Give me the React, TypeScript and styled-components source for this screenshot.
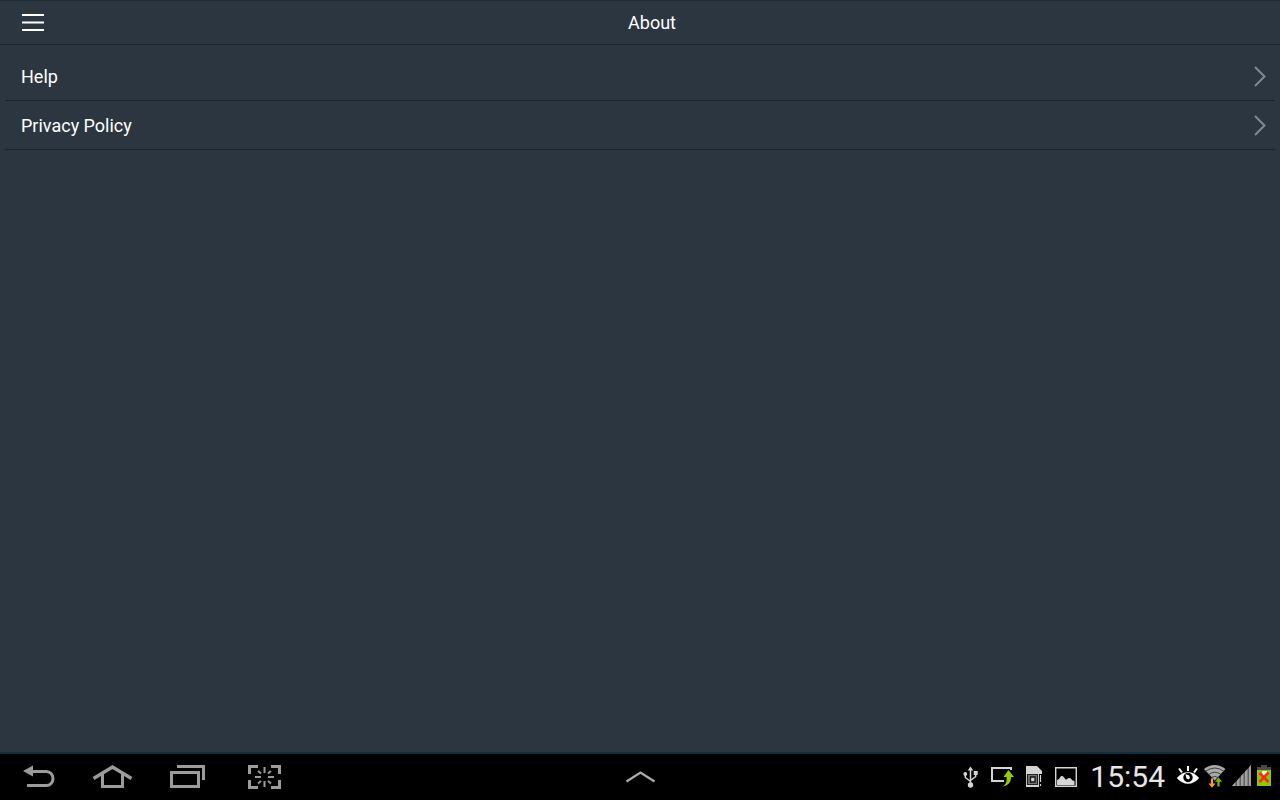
import React from "react";
import styled, { createGlobalStyle } from "styled-components";

const GlobalStyle = createGlobalStyle`
  *, *::before, *::after { box-sizing: border-box; }
  body {
    margin: 0;
    background: #2c3641;
    color: #ffffff;
    font-family: Roboto, "Noto Sans", sans-serif;
  }
`;

const Screen = styled.div`
  display: flex;
  flex-direction: column;
  min-height: 100vh;
`;

const Header = styled.header`
  display: grid;
  grid-template-columns: 1fr auto 1fr;
  align-items: center;
  height: 45px;
  border-top: 1px solid #232a33;
  border-bottom: 1px solid #1b232d;
`;

const Title = styled.h1`
  margin: 0;
  padding-left: 24px;
  font-size: 18px;
  line-height: 24px;
  font-weight: 400;
`;

const IconButton = styled.button<{ $width: number }>`
  display: flex;
  align-items: center;
  justify-content: center;
  width: ${(p) => p.$width}px;
  height: 100%;
  padding: 0;
  border: 0;
  background: none;
  color: inherit;
  cursor: pointer;
`;

const Main = styled.main`
  flex: 1;
`;

const List = styled.ul`
  margin: 0;
  padding: 7px 5px;
  list-style: none;
`;

const Item = styled.li`
  border-bottom: 1px solid #1b232d;
`;

const ItemLink = styled.a`
  display: flex;
  align-items: center;
  justify-content: space-between;
  height: 48px;
  padding: 0 8px 0 16px;
  color: inherit;
  font-size: 18px;
  line-height: 24px;
  text-decoration: none;
`;

const ItemLabel = styled.span`
  padding-top: 2px;
`;

const SystemBar = styled.footer`
  display: grid;
  grid-template-columns: 1fr auto 1fr;
  height: 48px;
  border-top: 2px solid #0c303f;
  background: #000000;
  color: #9b9b9b;
`;

const NavButtons = styled.nav`
  display: flex;
  padding-left: 1px;
`;

const Status = styled.div`
  display: flex;
  align-items: center;
  justify-content: flex-end;
  gap: 11px;
  padding-right: 8px;
  color: #d4d4d4;
`;

const IconGroup = styled.div<{ $gap: number }>`
  display: flex;
  gap: ${(p) => p.$gap}px;
`;

const Clock = styled.time`
  color: #e6e6e6;
  font-size: 30px;
  line-height: 46px;
`;

const Svg = styled.svg`
  display: block;
  flex: none;
`;

type IconProps = { w: number; h?: number; children: React.ReactNode };

const Icon = ({ w, h = 24, children }: IconProps) => (
  <Svg width={w} height={h} viewBox={`0 0 ${w} ${h}`} fill="none" aria-hidden="true">
    {children}
  </Svg>
);

const MenuIcon = () => (
  <Icon w={24}>
    <path d="M1 4h22M1 19h22" stroke="#fff" strokeWidth="2" />
    <path d="M1 11.500h22" stroke="#fff" strokeWidth="2" />
  </Icon>
);

const ChevronIcon = () => (
  <Icon w={14}>
    <path d="M2 3l9.500 9.500L2 22" stroke="#7f8995" strokeWidth="2" />
  </Icon>
);

const BackIcon = () => (
  <Icon w={75} h={46}>
    <path d="M22 17l10-5.500v11z" fill="currentColor" />
    <path d="M30 17.500h15.500a6.500 7 0 0 1 0 14H26" stroke="currentColor" strokeWidth="3" />
  </Icon>
);

const HomeIcon = () => (
  <Icon w={75} h={46}>
    <path d="M17.500 24.500L36.500 13l19 11.500" stroke="currentColor" strokeWidth="3.400" />
    <path d="M26.500 20v12.500h20V20" stroke="currentColor" strokeWidth="3" />
  </Icon>
);

const RecentsIcon = () => (
  <Icon w={75} h={46}>
    <path d="M20.500 18.500h27v14h-27z" stroke="currentColor" strokeWidth="3" />
    <path d="M26 12.500h26.500V26" stroke="currentColor" strokeWidth="3" />
  </Icon>
);

const CaptureIcon = () => (
  <Icon w={75} h={46}>
    <path
      d="M23.500 20v-7.500H32M45 12.500h8.500V20M53.500 26v7.500H45M32 33.500h-8.500V26"
      stroke="currentColor"
      strokeWidth="3"
    />
    <path
      d="M38.500 13v6M38.500 27v6M29 23h6M42 23h6M32 17l3 2.500M45 17l-3 2.500M32 29.500l3-2.500M45 29.500l-3-2.500"
      stroke="currentColor"
      strokeWidth="2"
    />
  </Icon>
);

const ExpandIcon = () => (
  <Icon w={32}>
    <path d="M2.500 16.500L16.500 7.500 30.500 16.500" stroke="#acacac" strokeWidth="2.200" />
  </Icon>
);

const UsbIcon = () => (
  <Icon w={24}>
    <path d="M11.500 1.500l2.800 4H8.700z" fill="currentColor" />
    <circle cx="11.500" cy="20" r="2.700" fill="currentColor" />
    <circle cx="6.300" cy="9" r="1.900" fill="currentColor" />
    <path d="M14.700 6h4v4h-4z" fill="currentColor" />
    <path d="M11.500 4v15M6.300 9v3.500l5.200 4M16.700 8v3.500l-5.200 4" stroke="currentColor" strokeWidth="1.500" />
  </Icon>
);

const ScreenShareIcon = () => (
  <Icon w={24}>
    <path d="M20 5V3H1v13h12" stroke="currentColor" strokeWidth="2" />
    <path d="M17.500 5l5.500 7h-3c0 5-2.500 8.500-8 9.500 3-2 4-5 3.700-9.500h-3.200z" fill="#97cc05" />
  </Icon>
);

const SimIcon = () => (
  <Icon w={24}>
    <path d="M3 1h11l5 5v16H3z" fill="currentColor" />
    <path d="M4.500 9.500h10v10h-10z" fill="#777" stroke="#222" strokeWidth="1.200" />
    <path d="M7.500 12h4.500v5H7.500z" fill="#d4d4d4" stroke="#111" strokeWidth="1.300" />
    <path d="M16 9h3v13h-3z" fill="#000" />
    <path d="M17.500 10v7M17.500 19v2" stroke="currentColor" strokeWidth="1.200" />
  </Icon>
);

const PictureIcon = () => (
  <Icon w={24}>
    <path d="M.7 2.700h20.600v18.600H.7z" stroke="currentColor" strokeWidth="1.400" />
    <path d="M2 20v-5l2-1 2-3 2 .3 3 3.400 2.500-1.700 2 .2 2 2.300 2 .5v4z" fill="currentColor" />
  </Icon>
);

const EyeIcon = () => (
  <Icon w={24}>
    <path d="M.8 13Q6 7 12 7t11.200 6Q18 18.800 12 18.800T.8 13z" fill="#fff" />
    <circle cx="12" cy="12.500" r="4.700" fill="#000" />
    <path d="M9.500 9l3.500 1.500 1 2.500-1.500 1.500-2-1z" fill="#fff" />
    <path d="M12 1v5M3 3.500l3 4M21 3.500l-3 4" stroke="#fff" strokeWidth="2" />
  </Icon>
);

const WifiIcon = () => (
  <Icon w={24}>
    <path d="M0 4q10.500-8 21.500 0L10.800 15.500z" fill="#a9a9a9" />
    <path d="M1.500 6.300q9.300-6.600 18.500 0M4.500 9.500q6.300-4.500 12.600 0M7.500 12.500q3.300-2.300 6.600 0" stroke="#333" strokeWidth="0.900" />
    <path d="M8 13.500v6" stroke="#ff9b2d" strokeWidth="2.200" />
    <path d="M4.500 18.500h7L8 22.800z" fill="#ff9b2d" />
    <path d="M14.500 16v5.500" stroke="#79b800" strokeWidth="2.200" />
    <path d="M11 16.800h7l-3.500-4.500z" fill="#79b800" />
  </Icon>
);

const SignalIcon = () => (
  <Icon w={20}>
    <path d="M0 21L19 0v21z" fill="#5f5f5f" />
    <path
      d="M0 21l3.500-3.900V21zM5 21v-5.500l2.500-2.800V21zM9 21v-9.900l2.500-2.800V21zM13 21V6.600l2.500-2.700V21zM17 21V2.200L19 0v21z"
      fill="#a0a0a0"
    />
  </Icon>
);

const BatteryIcon = () => (
  <Icon w={16}>
    <path d="M5 0h6v2h4v4H1V2h4z" fill="#4b4b4b" />
    <path d="M1 5h14v16H1z" fill="#8fc400" />
    <path d="M6 6h5l-1 6H7z" fill="#fff" />
    <path d="M3.500 8l9 9M12.500 7.500l-9 9.500" stroke="#f0301c" strokeWidth="2.600" />
  </Icon>
);

const links = ["Help", "Privacy Policy"];

const navActions = [
  { label: "Back", Glyph: BackIcon },
  { label: "Home", Glyph: HomeIcon },
  { label: "Recent apps", Glyph: RecentsIcon },
  { label: "Screen capture", Glyph: CaptureIcon },
];

export default function App() {
  return (
    <Screen>
      <GlobalStyle />
      <Header>
        <IconButton $width={66} type="button" aria-label="Menu">
          <MenuIcon />
        </IconButton>
        <Title>About</Title>
      </Header>
      <Main>
        <List>
          {links.map((label) => (
            <Item key={label}>
              <ItemLink href="#">
                <ItemLabel>{label}</ItemLabel>
                <ChevronIcon />
              </ItemLink>
            </Item>
          ))}
        </List>
      </Main>
      <SystemBar>
        <NavButtons>
          {navActions.map(({ label, Glyph }) => (
            <IconButton key={label} $width={75} type="button" aria-label={label}>
              <Glyph />
            </IconButton>
          ))}
        </NavButtons>
        <IconButton $width={48} type="button" aria-label="Expand tray">
          <ExpandIcon />
        </IconButton>
        <Status>
          <IconGroup $gap={8}>
            <UsbIcon />
            <ScreenShareIcon />
            <SimIcon />
            <PictureIcon />
          </IconGroup>
          <Clock>15:54</Clock>
          <IconGroup $gap={4}>
            <EyeIcon />
            <WifiIcon />
            <SignalIcon />
            <BatteryIcon />
          </IconGroup>
        </Status>
      </SystemBar>
    </Screen>
  );
}
